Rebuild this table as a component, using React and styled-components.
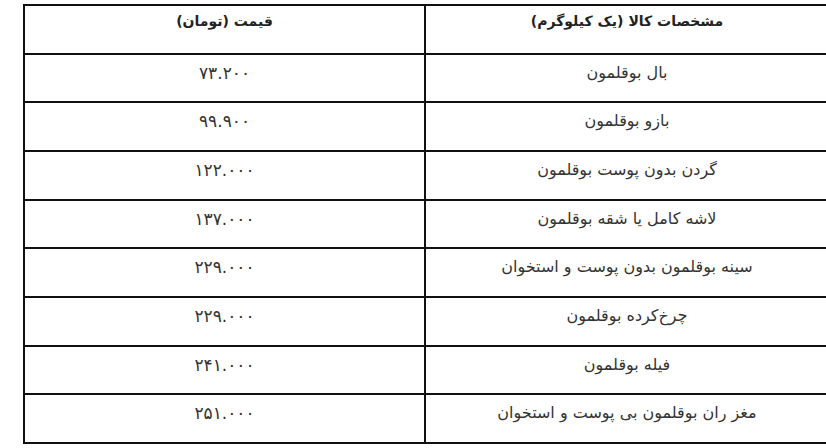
import React from "react";
import styled, { createGlobalStyle } from "styled-components";

const rows = [
  { name: "بال بوقلمون", price: "۷۳.۲۰۰" },
  { name: "بازو بوقلمون", price: "۹۹.۹۰۰" },
  { name: "گردن بدون پوست بوقلمون", price: "۱۲۲.۰۰۰" },
  { name: "لاشه کامل یا شقه بوقلمون", price: "۱۳۷.۰۰۰" },
  { name: "سینه بوقلمون بدون پوست و استخوان", price: "۲۲۹.۰۰۰" },
  { name: "چرخ‌کرده بوقلمون", price: "۲۲۹.۰۰۰" },
  { name: "فیله بوقلمون", price: "۲۴۱.۰۰۰" },
  { name: "مغز ران بوقلمون بی پوست و استخوان", price: "۲۵۱.۰۰۰" },
];

const GlobalStyle = createGlobalStyle`
  html, body {
    margin: 0;
    background: #fff;
    overflow: hidden;
  }
  body {
    font-family: "DejaVu Sans", "Liberation Sans", sans-serif;
  }
`;

const Page = styled.div`
  width: 826px;
  height: 448px;
  padding: 4px 0 0 23px;
  box-sizing: border-box;
  overflow: hidden;
`;

const PriceTable = styled.div`
  direction: rtl;
  width: 805px;
  display: grid;
  grid-template-columns: 404px 401px;
  grid-auto-rows: 48.67px;
  border-top: 2px solid #111;
  border-right: 2px solid #111;
`;

const Cell = styled.div`
  border-left: 2px solid #111;
  border-bottom: 2px solid #111;
  padding-top: ${(p) => (p.$head ? "4px" : "7px")};
  text-align: center;
  font-size: ${(p) => (p.$head ? "14px" : p.$num ? "17px" : "16px")};
  line-height: 22px;
  color: ${(p) => (p.$head ? "#222" : "#333")};
  font-weight: ${(p) => (p.$head ? "bold" : "normal")};
`;

const App = () => {
  return (
    <>
      <GlobalStyle />
      <Page>
        <PriceTable>
          <Cell $head>مشخصات کالا (یک کیلوگرم)</Cell>
          <Cell $head>قیمت (تومان)</Cell>
          {rows.map((r, i) => (
            <React.Fragment key={i}>
              <Cell>{r.name}</Cell>
              <Cell $num>{r.price}</Cell>
            </React.Fragment>
          ))}
        </PriceTable>
      </Page>
    </>
  );
};

export default App;
